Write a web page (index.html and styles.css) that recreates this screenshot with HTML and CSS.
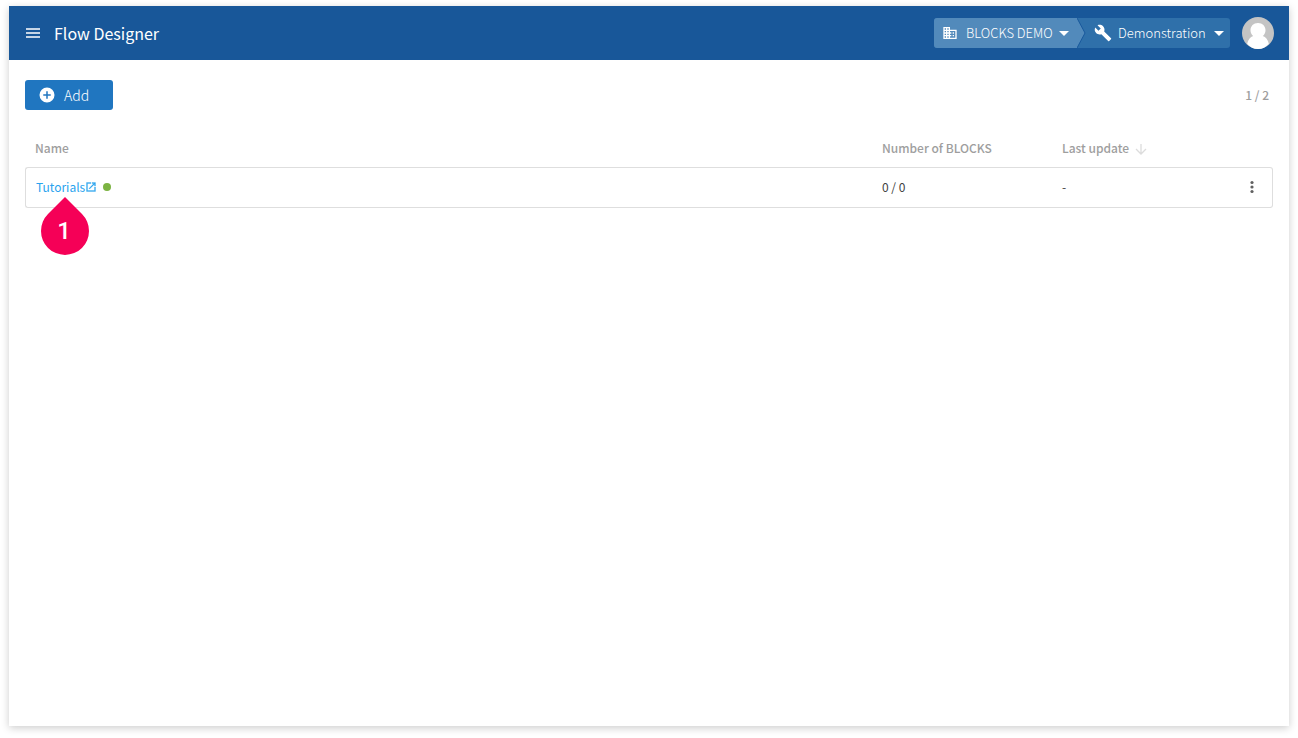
FILE: index.html
```html
<!DOCTYPE html>
<html lang="en">
<head>
  <meta charset="UTF-8" />
  <meta name="viewport" content="width=device-width, initial-scale=1.0" />
  <title>Flow Designer</title>
  <link rel="stylesheet" href="styles.css">
</head>
<body>
  <div class="window">
    <header class="navbar">
      <button class="menu-btn" type="button" aria-label="Menu">
        <svg width="14" height="10" viewBox="0 0 14 10"><path d="M0 1h14M0 5h14M0 9h14" stroke="currentColor" stroke-width="1.6"/></svg>
      </button>
      <h1 class="app-title">Flow Designer</h1>

      <!-- Organization / project switcher -->
      <div class="switcher">
        <label class="switch org">
          <svg width="16" height="16" viewBox="0 0 24 24" fill="currentColor"><path d="M12 7V3H2v18h20V7H12zM6 19H4v-2h2v2zm0-4H4v-2h2v2zm0-4H4V9h2v2zm0-4H4V5h2v2zm4 12H8v-2h2v2zm0-4H8v-2h2v2zm0-4H8V9h2v2zm0-4H8V5h2v2zm10 12h-8v-2h2v-2h-2v-2h2v-2h-2V9h8v10zm-2-8h-2v2h2v-2zm0 4h-2v2h2v-2z"/></svg>
          <select aria-label="Organization"><option>BLOCKS DEMO</option></select>
          <svg class="caret" width="10" height="5" viewBox="0 0 10 5" fill="currentColor"><path d="M0 0h10L5 5z"/></svg>
        </label>
        <svg class="divider" width="9" height="30" viewBox="0 0 9 30"><path d="M0 0l8 15-8 15z" fill="#528abb"/><path d="M0 0l8 15-8 15" fill="none" stroke="#19599c"/></svg>
        <label class="switch project">
          <svg width="18" height="18" viewBox="0 0 24 24" fill="currentColor"><path d="M22.7 19l-9.1-9.1c.9-2.3.4-5-1.5-6.9-2-2-5-2.4-7.4-1.3L9 6 6 9 1.6 4.700C.4 7.1.9 10.1 2.9 12.100c1.9 1.9 4.6 2.4 6.900 1.500l9.1 9.100c.4.4 1 .4 1.400 0l2.300-2.300c.5-.4.5-1.100.1-1.400z"/></svg>
          <select aria-label="Project"><option>Demonstration</option></select>
          <svg class="caret" width="10" height="5" viewBox="0 0 10 5" fill="currentColor"><path d="M0 0h10L5 5z"/></svg>
        </label>
      </div>

      <button class="avatar" type="button" aria-label="Account">
        <svg width="32" height="32" viewBox="0 0 32 32"><circle cx="16" cy="16" r="16" fill="#c4c4c4"/><path d="M16 6c4.500 0 7.500 3.200 7.500 7.200 0 2.400-1.100 4.500-2.700 5.800 3 1 5.200 3.800 6 7.700C24 30 20.200 32 16 32S8 30 5.200 26.700c.8-3.900 3-6.700 6-7.700-1.600-1.300-2.700-3.400-2.700-5.800C8.500 9.200 11.500 6 16 6z" fill="#fff"/></svg>
      </button>
    </header>

    <main class="content">
      <div class="toolbar">
        <button class="add-btn" type="button">
          <svg width="18" height="18" viewBox="0 0 24 24" fill="currentColor"><path d="M12 2a10 10 0 100 20 10 10 0 000-20zm5 11h-4v4h-2v-4H7v-2h4V7h2v4h4v2z"/></svg>
          Add
        </button>
        <span class="count">1 / 2</span>
      </div>

      <table class="flows">
        <thead>
          <tr>
            <th>Name</th>
            <th class="col-blocks">Number of BLOCKS</th>
            <th class="col-date">Last update
              <svg class="sort" width="12" height="12" viewBox="0 0 12 12"><path d="M6 1v10M1 6l5 5 5-5" fill="none" stroke="#dcdcdc" stroke-width="1.3"/></svg>
            </th>
            <th class="col-menu"></th>
          </tr>
        </thead>
        <tbody>
          <tr>
            <td>
              <div class="name">
                <a href="#">Tutorials<svg width="12" height="12" viewBox="0 0 24 24" fill="currentColor" stroke="currentColor" stroke-width=".5"><path d="M19 19H5V5h7V3H3v18h18v-9h-2v7zM14 3v2h3.600l-9.800 9.800 1.400 1.400L19 6.400V10h2V3h-7z"/></svg></a>
                <span class="status"></span>
                <span class="pin">
                  <svg width="48" height="58" viewBox="0 0 48 58"><path d="M24 0l17 17a24 24 0 11-34 0z" fill="#f50057"/></svg>
                  <b>1</b>
                </span>
              </div>
            </td>
            <td>0 / 0</td>
            <td>-</td>
            <td class="col-menu">
              <button class="more" type="button" aria-label="More">
                <svg width="4" height="14" viewBox="0 0 4 14" fill="currentColor"><circle cx="2" cy="2.500" r="1.600"/><circle cx="2" cy="7" r="1.600"/><circle cx="2" cy="11.500" r="1.600"/></svg>
              </button>
            </td>
          </tr>
        </tbody>
      </table>
    </main>
  </div>
</body>
</html>
```
FILE: styles.css
```css
:root {
  --navbar: #185799;
  --primary: #2076c0;
  --link: #29a3ee;
  --muted: #9e9e9e;
  --line: #dedede;
  --text: #424242;
}
*, *::before, *::after { box-sizing: border-box; }
body {
  margin: 0; padding: 6px 9px 12px; min-height: 100vh;
  display: flex; flex-direction: column;
  background: #fff; color: var(--text);
  font: 12px/20px 'Noto Sans CJK JP', sans-serif;
}
svg { display: block; flex: none; }
button, select {
  margin: 0; padding: 0; border: none; background: none;
  font: inherit; color: inherit; cursor: pointer;
}

.window {
  flex: 1; background: #fff;
  box-shadow: 0 2px 8px rgba(0,0,0,0.2);
}

.navbar {
  display: flex; align-items: center;
  height: 54px; padding: 0 15px 0 17px;
  background: var(--navbar); color: #fff;
}
.app-title { margin: 0 auto 0 14px; font-size: 16px; line-height: 24px; font-weight: 400; }

.switcher {
  display: flex; height: 30px; margin-right: 12px;
  background: #2f70aa; border-radius: 3px; overflow: hidden;
}
.switch { display: flex; align-items: center; font-size: 13px; font-weight: 300; }
.switch select { appearance: none; margin: 0 6px 0 8px; }
.org { padding: 0 8px; background: #528abb; }
.project { padding: 0 6px 0 8px; }
.project select { margin: 0 8px 0 6px; }
.avatar { border-radius: 50%; }

.content { padding: 20px 16px; }
.toolbar { display: flex; align-items: center; justify-content: space-between; }
.add-btn {
  display: flex; align-items: center; gap: 8px;
  width: 88px; height: 30px; padding: 0 13px;
  background: var(--primary); color: #fff;
  border-radius: 3px; font-size: 14px; font-weight: 300;
}
.count { padding-right: 4px; color: var(--muted); font-weight: 500; }

.flows {
  width: 100%; margin-top: 20px;
  table-layout: fixed; border-collapse: separate; border-spacing: 0;
}
.flows th, .flows td { padding: 0 10px 2px; text-align: left; }
.flows th { height: 37px; color: var(--muted); font-weight: 500; }
.flows td { height: 41px; border: 1px solid var(--line); border-width: 1px 0; }
.flows td:first-child { border-left-width: 1px; border-radius: 3px 0 0 3px; }
.flows td:last-child { border-right-width: 1px; border-radius: 0 3px 3px 0; }
.col-blocks, .col-date { width: 180px; }
.flows .col-menu { width: 41px; padding: 0 0 2px; }
.sort { display: inline-block; margin-left: 3px; vertical-align: middle; }

.name { position: relative; display: flex; align-items: center; }
.name a { display: flex; align-items: center; color: var(--link); text-decoration: none; }
.status { width: 8px; height: 8px; margin-left: 6px; background: #7cb342; border-radius: 50%; }
.more { display: flex; align-items: center; justify-content: center; width: 100%; height: 36px; color: #616161; }

/* Step marker hanging under the link */
.pin { position: absolute; top: 20px; left: 5px; }
.pin b {
  position: absolute; top: 20px; left: 0; width: 46px;
  color: #fff; text-align: center;
  font: 500 24px/28px Roboto, sans-serif;
}
```
